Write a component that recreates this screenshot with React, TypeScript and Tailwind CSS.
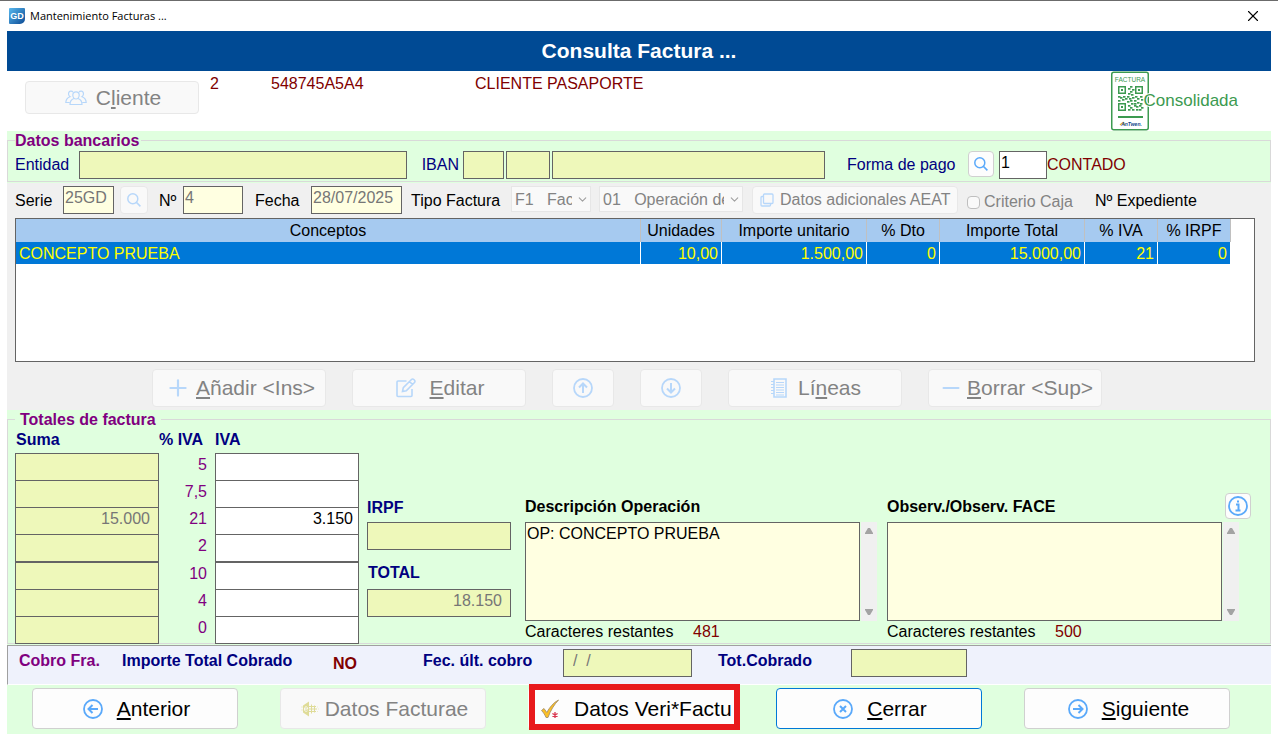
import type { ReactNode } from 'react';
import { ChevronDown, Minus, Plus, X } from 'lucide-react';

interface ButtonProps {
  children?: ReactNode;
  icon: ReactNode;
  className: string;
  disabled?: boolean;
  label?: string;
}

const rates = [
  { rate: '5', base: '', quota: '' },
  { rate: '7,5', base: '', quota: '' },
  { rate: '21', base: '15.000', quota: '3.150' },
  { rate: '2', base: '', quota: '' },
  { rate: '10', base: '', quota: '' },
  { rate: '4', base: '', quota: '' },
  { rate: '0', base: '', quota: '' },
];

const columns = [
  { title: 'Conceptos', width: '' },
  { title: 'Unidades', width: 'w-[81px]' },
  { title: 'Importe unitario', width: 'w-[145px]' },
  { title: '% Dto', width: 'w-[73px]' },
  { title: 'Importe Total', width: 'w-[145px]' },
  { title: '% IVA', width: 'w-[73px]' },
  { title: '% IRPF', width: 'w-[73px]' },
];

const lines = [['CONCEPTO PRUEBA', '10,00', '1.500,00', '0', '15.000,00', '21', '0']];

// dark modules of the finder-less part of the little QR code
const qrModules = [
  [12, 0], [10, 2], [14, 3], [12, 5], [10, 7], [13, 8], [0, 10], [2, 11], [5, 10], [7, 12], [4, 13], [0, 14],
  [9, 10], [11, 12], [14, 11], [17, 10], [19, 12], [22, 10], [23, 13], [16, 14], [12, 14], [9, 15], [13, 17],
  [16, 17], [19, 16], [22, 17], [10, 19], [12, 21], [16, 19], [18, 20], [21, 19], [23, 21], [10, 23], [14, 23],
  [18, 23], [21, 23],
];

function Button({ children, icon, className, disabled, label }: ButtonProps) {
  return (
    <button
      type="button"
      disabled={disabled}
      aria-label={label}
      className={`flex shrink-0 items-center rounded border ${
        disabled ? 'border-[#e8e8e8] bg-[#f9f9f9] text-[#838383]' : 'bg-[#fdfdfd] text-black'
      } ${className}`}
    >
      {icon}
      {children && <span className="whitespace-nowrap">{children}</span>}
    </button>
  );
}

function CircleIcon({ d, muted }: { d: string; muted?: boolean }) {
  return (
    <svg viewBox="0 0 20 20" fill="none" strokeWidth="2" className={`size-5 shrink-0 ${muted ? 'stroke-[#b7d7fa]' : 'stroke-[#5aa9fa]'}`}>
      <circle cx="10" cy="10" r="9" strokeWidth="1.8" />
      <path d={d} />
    </svg>
  );
}

function UsersIcon() {
  return (
    <svg viewBox="0 0 22 16" fill="none" stroke="#b7d7fa" strokeWidth="1.2" className="h-4 w-[22px] shrink-0">
      <path d="M11 1.800c2 0 3.200 1.400 3.200 3.200S13 9 11 9 7.800 6.800 7.800 5 9 1.800 11 1.800z" />
      <path d="M9 8.500c-2.500.8-4 2.500-4 6h12c0-3.500-1.500-5.200-4-6" />
      <path d="M8 2.300C7.500 1.400 6.500 1 5.500 1.200 4 1.500 3.300 3 3.600 4.500c.2 1 .7 1.800 1.400 2.200C2.500 7.500 1 9 .8 12.500h4M14 2.300c.5-.9 1.500-1.300 2.500-1.100 1.500.3 2.200 1.800 1.900 3.300-.2 1-.7 1.800-1.400 2.200 2.500.8 4 2.300 4.200 5.800h-4" />
    </svg>
  );
}

function EditIcon() {
  return (
    <svg viewBox="0 0 20 20" fill="none" stroke="#b7d7fa" strokeWidth="1.6" className="size-5 shrink-0">
      <path d="M10.500 3H2a1 1 0 0 0-1 1v13.500a1 1 0 0 0 1 1h13a1 1 0 0 0 1-1V11" />
      <path d="m6.500 13.500.8-3.800 8.200-8.200a1.600 1.600 0 0 1 2.300 0l.7.7a1.600 1.600 0 0 1 0 2.300l-8.200 8.200zM13.500 3.500l3 3" />
    </svg>
  );
}

function NotebookIcon() {
  return (
    <svg viewBox="0 0 16 20" fill="none" stroke="#b7d7fa" className="h-5 w-4 shrink-0">
      <path d="M3 1h12v18H3z" strokeWidth="1.6" />
      <path d="M5 4.500h8M5 7h8M5 9.500h8M5 12h8M5 14.500h8M5 17h8M0 3.500h3M0 6.500h3M0 9.500h3M0 12.500h3M0 15.500h3" />
    </svg>
  );
}

function CopyIcon() {
  return (
    <svg viewBox="0 0 14 14" fill="none" stroke="#b7d7fa" strokeWidth="1.3" className="size-3.5 shrink-0">
      <rect x="3.500" y="1" width="9.500" height="9.500" rx="1" />
      <path d="M3.500 3.500H2a1 1 0 0 0-1 1V12a1 1 0 0 0 1 1h7.500a1 1 0 0 0 1-1v-1.500" />
    </svg>
  );
}

function SearchIcon({ muted }: { muted?: boolean }) {
  return (
    <svg viewBox="0 0 14 14" fill="none" strokeWidth="1.5" className={`size-3.5 shrink-0 ${muted ? 'stroke-[#b7d7fa]' : 'stroke-[#5aa9fa]'}`}>
      <circle cx="5.800" cy="5.800" r="5" />
      <path d="m9.400 9.400 4 4" />
    </svg>
  );
}

function FacturaeIcon() {
  return (
    <svg viewBox="0 0 18 16" fill="none" className="h-4 w-[18px] shrink-0">
      <path d="M2 4.500 8 .5v15l-6-4z" fill="#dfdc98" />
      <path d="M3.500 8h3.200c0-3-3.200-3-3.200 0s2 2.500 3 1.800" stroke="#f9f9f9" />
      <path d="M10.500 3.500v9M13.500 4.500v7M8 5.500h7M8 8h8M8 10.500h7" stroke="#dfdc98" />
      <path d="M0 6h2M0 9h2M16 6h1M17 8h1M16 10.500h1" stroke="#efedc9" />
    </svg>
  );
}

function CheckIcon() {
  return (
    <svg viewBox="0 0 20 20" fill="none" className="size-5 shrink-0">
      <path d="M1.500 11.500 4 9.500l2.800 4C9.500 8.500 13.500 3.500 18.500 1c-4.500 4.800-8 10.500-10.500 17.500H6C5 16 3.500 13.500 1.500 11.500z" fill="#fbbf24" stroke="#a8926a" strokeWidth=".9" />
      <path d="M15 13v6M12.400 14.500l5.200 3M17.600 14.500l-5.200 3" stroke="#d9364f" strokeWidth="1.300" />
    </svg>
  );
}

function AppIcon() {
  return (
    <svg viewBox="0 0 16 16" className="size-4 shrink-0">
      <defs>
        <linearGradient id="gd" x1="0" y1="0" x2="1" y2="1">
          <stop offset="0" stopColor="#58b8ee" />
          <stop offset="1" stopColor="#0c4a94" />
        </linearGradient>
      </defs>
      <path d="M1 0h14a1 1 0 0 1 1 1v10a5 5 0 0 1-5 5H1a1 1 0 0 1-1-1V1a1 1 0 0 1 1-1z" fill="url(#gd)" />
      <text x="8" y="11" textAnchor="middle" fontSize="9" fontWeight="700" fill="#fff">GD</text>
    </svg>
  );
}

function QrBadge() {
  return (
    <svg viewBox="0 0 38 60" fill="none" className="h-[60px] w-[38px] shrink-0">
      <rect x=".75" y="1.250" width="36.500" height="57.500" rx="2" stroke="#3c9a50" strokeWidth="1.500" />
      <text x="19" y="11" textAnchor="middle" fontSize="6.500" fill="#3c9a50">FACTURA</text>
      <g transform="translate(7 15)">
        <path d="M.75.75h6.500v6.500H.75zM17.750.75h6.500v6.500h-6.500zM.75 17.750h6.500v6.500H.75z" stroke="#3c9a50" strokeWidth="1.500" />
        <path d="M3 3h2v2H3zM20 3h2v2h-2zM3 20h2v2H3z" fill="#3c9a50" />
        {qrModules.map(([x, y]) => (
          <rect key={`${x}-${y}`} x={x} y={y} width="2.500" height="1.700" fill="#3c9a50" />
        ))}
      </g>
      <path d="M7 46h25" stroke="#3c9a50" strokeWidth="2" />
      <path d="m9 54 3-2.500 1.500 2.500" stroke="#e3b62c" strokeWidth="1.300" />
      <text x="20.500" y="55" textAnchor="middle" fontSize="5" fontStyle="italic" fontWeight="700" fill="#14478a">AnTwen.</text>
    </svg>
  );
}

function SearchButton({ label, disabled, className }: { label: string; disabled?: boolean; className: string }) {
  return (
    <Button
      label={label}
      disabled={disabled}
      className={`items-start justify-center ${className}`}
      icon={<SearchIcon muted={disabled} />}
    />
  );
}

function Notes({ id, title, text, left, children }: { id: string; title: string; text: string; left: string; children?: ReactNode }) {
  return (
    <div className="min-w-0 flex-1">
      <div className="flex h-[29px] items-start justify-between">
        <label htmlFor={id} className="pt-[5px] font-bold">{title}</label>
        {children}
      </div>
      <div className="flex h-[99px]">
        <textarea
          id={id}
          readOnly
          defaultValue={text}
          className="min-w-0 flex-1 resize-none border border-[#646464] bg-[#ffffe1] px-px pt-px leading-5 outline-none"
        />
        <div className="ml-px flex w-4 flex-col items-center justify-between bg-[#f0f0f0] py-[6px]">
          <svg viewBox="0 0 8 6" className="h-1.5 w-2"><path d="M0 6V5l3-5h2l3 5v1z" fill="#a3a3a3" /></svg>
          <svg viewBox="0 0 8 6" className="h-1.5 w-2"><path d="M0 0v1l3 5h2l3-5V0z" fill="#a3a3a3" /></svg>
        </div>
      </div>
      <p className="flex pt-0.5">
        <span className="w-[168px]">Caracteres restantes</span>
        <span className="text-[#800000]">{left}</span>
      </p>
    </div>
  );
}

const box = 'h-7 min-w-0 border border-[#646464] px-px pb-1 outline-none';
const olive = 'bg-[#eef8ba]';
const cream = 'bg-[#ffffe1] text-[#767676]';

export default function App() {
  return (
    <div className="min-h-screen w-full border-t border-[#6b6b6b] bg-white px-[7px] font-['Liberation_Sans',Arial,sans-serif] text-base leading-[18px] text-black">
      <header className="flex h-[30px] items-center">
        <span className="ml-0.5"><AppIcon /></span>
        <span className="ml-[5px] flex-1 font-['Open_Sans','Noto_Sans',sans-serif] text-[11px]">Mantenimiento Facturas ...</span>
        <button type="button" aria-label="Cerrar ventana" className="mr-[9px]"><X size={18} strokeWidth={1.5} /></button>
      </header>

      <h1 className="flex h-10 items-center justify-center bg-[#004a94] text-[21px] font-bold text-white">Consulta Factura ...</h1>

      <section className="flex h-[60px] text-[#800000]">
        <Button disabled icon={<UsersIcon />} className="mt-[10px] ml-[18px] h-[33px] w-[174px] justify-center gap-[9px] pl-0.5 text-[21px]">
          C<u className="underline-offset-2">l</u>iente
        </Button>
        <span className="ml-[11px] w-[61px] pt-1">2</span>
        <span className="w-[204px] pt-1">548745A5A4</span>
        <span className="flex-1 pt-1">CLIENTE PASAPORTE</span>
        <div className="mr-[33px] flex items-center text-[#3c9a50]">
          <QrBadge />
          <span className="relative -ml-1.5 text-[17px] [text-shadow:1px_0_#fff,-1px_0_#fff,0_1px_#fff,0_-1px_#fff]">Consolidada</span>
        </div>
      </section>

      <div className="bg-[#e0ffdf] pb-px">
        <fieldset className="h-[51px] border border-[#d9d9d9] px-[7px]">
          <legend className="h-[18px] pt-px pr-0.5 font-bold text-[#800080]">Datos bancarios</legend>
          <div className="flex items-start pt-0.5 text-[#000080]">
            <label htmlFor="entidad" className="w-16 pt-[5px]">Entidad</label>
            <input id="entidad" disabled className={`${box} ${olive} flex-[328]`} />
            <label htmlFor="iban" className="ml-[15px] w-[41px] pt-[5px]">IBAN</label>
            <input id="iban" disabled className={`${box} ${olive} w-[41px]`} />
            <input aria-label="IBAN entidad" disabled className={`${box} ${olive} ml-0.5 w-11`} />
            <input aria-label="IBAN cuenta" disabled className={`${box} ${olive} ml-0.5 flex-[273]`} />
            <label htmlFor="pago" className="ml-[22px] w-[121px] pt-[5px]">Forma de pago</label>
            <SearchButton label="Buscar forma de pago" className="size-[26px] border-[#d0d0d0] pt-[5px]" />
            <input id="pago" defaultValue="1" className={`${box} ml-[5px] w-12 bg-white text-black`} />
            <span className="w-[216px] pt-[5px] text-[#800000]">CONTADO</span>
          </div>
        </fieldset>
      </div>

      <main className="h-[227px] bg-[#f0f0f0] px-2 pt-[3px]">
        <div className="flex h-8 items-start whitespace-nowrap">
          <label htmlFor="serie" className="w-12 pt-1.5">Serie</label>
          <input id="serie" disabled defaultValue="25GD" className={`${box} ${cream} w-[51px]`} />
          <SearchButton label="Buscar serie" disabled className="ml-1.5 size-7 pt-1.5" />
          <label htmlFor="numero" className="ml-[11px] w-6 pt-1.5">Nº</label>
          <input id="numero" disabled defaultValue="4" className={`${box} ${cream} w-[60px]`} />
          <label htmlFor="fecha" className="ml-3 w-14 pt-1.5">Fecha</label>
          <input id="fecha" disabled defaultValue="28/07/2025" className={`${box} ${cream} w-[91px]`} />
          <label htmlFor="tipo" className="ml-[9px] w-[100px] pt-1.5">Tipo Factura</label>
          <span className="relative">
            <select id="tipo" disabled className="h-[26px] w-20 appearance-none overflow-hidden border border-[#e6e6e6] bg-[#f9f9f9] pt-0.5 pr-[18px] pl-[3px] text-[#838383] opacity-100">
              <option>{'F1\u00a0\u00a0\u00a0Factura'}</option>
            </select>
            <ChevronDown size={13} color="#a0a0a0" className="absolute top-[7px] right-0.5" />
          </span>
          <span className="relative ml-2">
            <select aria-label="Clave de operación" disabled className="h-[26px] w-36 appearance-none overflow-hidden border border-[#e6e6e6] bg-[#f9f9f9] pt-0.5 pr-[18px] pl-[3px] text-[#838383] opacity-100">
              <option>{'01\u00a0\u00a0\u00a0Operación de régimen general'}</option>
            </select>
            <ChevronDown size={13} color="#a0a0a0" className="absolute top-[7px] right-0.5" />
          </span>
          <Button disabled icon={<CopyIcon />} className="ml-[9px] h-7 w-[206px] gap-1.5 pl-[7px]">Datos adicionales AEAT</Button>
          <label className="ml-[9px] flex items-center gap-1 pt-[7px] text-[#838383]">
            <input type="checkbox" disabled className="size-[13px] appearance-none rounded-sm border border-[#bfbfbf] bg-[#f9f9f9]" />
            Criterio Caja
          </label>
          <span className="ml-[22px] pt-1.5">Nº Expediente</span>
        </div>

        <div className="mr-2 h-36 border border-[#646464] bg-white pr-[23px]">
          <table className="w-full table-fixed border-collapse">
            <thead>
              <tr className="h-[23px] bg-[#a6caf0]">
                {columns.map(c => (
                  <th key={c.title} className={`border-r border-[#c0c0c0] p-0 font-normal ${c.width}`}>{c.title}</th>
                ))}
              </tr>
            </thead>
            <tbody>
              {lines.map((line, i) => (
                <tr key={i} className="h-[22px] bg-[#0078d7] text-[#ffff00]">
                  {line.map((cell, j) => (
                    <td key={j} className={`border-r border-white px-[3px] pt-0.5 pb-0 ${j ? 'text-right' : ''}`}>{cell}</td>
                  ))}
                </tr>
              ))}
            </tbody>
          </table>
        </div>

        <div className="mt-[7px] ml-[137px] flex gap-[26px] text-[21px]">
          <Button disabled icon={<Plus size={26} strokeWidth={2} color="#b7d7fa" />} className="h-[38px] w-[174px] gap-[5px] pl-3">
            <u className="underline-offset-2">A</u>ñadir &lt;Ins&gt;
          </Button>
          <Button disabled icon={<EditIcon />} className="h-[38px] w-[174px] justify-center gap-[14px] pl-0.5">
            <u className="underline-offset-2">E</u>ditar
          </Button>
          <Button disabled label="Subir" icon={<CircleIcon muted d="M10 15V6M6 9.500 10 5.500l4 4" />} className="h-[38px] w-[62px] justify-center" />
          <Button disabled label="Bajar" icon={<CircleIcon muted d="M10 5v9M6 10.500l4 4 4-4" />} className="h-[38px] w-[62px] justify-center" />
          <Button disabled icon={<NotebookIcon />} className="h-[38px] w-[174px] justify-center gap-[11px] pl-0.5">
            Lí<u className="underline-offset-2">n</u>eas
          </Button>
          <Button disabled icon={<Minus size={26} strokeWidth={1.7} color="#b7d7fa" />} className="h-[38px] w-[174px] gap-[3px] pl-[9px]">
            <u className="underline-offset-2">B</u>orrar &lt;Sup&gt;
          </Button>
        </div>
      </main>

      <div className="bg-[#e0ffdf] pb-px">
        <fieldset className="h-[234px] border border-[#d9d9d9] pr-[31px] pl-[7px]">
          <legend className="h-[18px] px-[5px] pt-px font-bold text-[#800080]">Totales de factura</legend>
          <div className="flex">
            <div>
              <div className="flex h-[25px] pt-[3px] pl-px font-bold text-[#000080]">
                <span className="w-[143px]">Suma</span>
                <span className="w-14">% IVA</span>
                <span>IVA</span>
              </div>
              {rates.map((r, i) => (
                <div key={r.rate} className={`flex items-start ${i === 0 || i === 4 ? '' : '-mt-px'}`}>
                  <input aria-label={`Suma al ${r.rate} %`} disabled defaultValue={r.base} className={`${box} ${olive} w-36 pr-2 text-right text-[#767676]`} />
                  <span className="w-12 pt-[3px] text-right text-[#800080]">{r.rate}</span>
                  <input aria-label={`IVA al ${r.rate} %`} defaultValue={r.quota} className={`${box} ml-2 w-36 bg-white pr-[5px] text-right`} />
                </div>
              ))}
            </div>

            <div className="ml-2 flex w-36 flex-col pt-[71px] text-[#000080]">
              <label htmlFor="irpf" className="h-[23px] font-bold">IRPF</label>
              <input id="irpf" disabled className={`${box} ${olive}`} />
              <label htmlFor="total" className="mt-[14px] h-[25px] pl-px font-bold">TOTAL</label>
              <input id="total" disabled defaultValue="18.150" className={`${box} ${olive} pr-2 text-right text-[#767676]`} />
            </div>

            <div className="ml-[14px] flex flex-1 gap-[10px] pt-[65px]">
              <Notes id="descripcion" title="Descripción Operación" text="OP: CONCEPTO PRUEBA" left="481" />
              <Notes id="observaciones" title="Observ./Observ. FACE" text="" left="500">
                <Button
                  label="Información"
                  className="-mr-3 size-[26px] justify-center border-[#d0d0d0]"
                  icon={<CircleIcon d="M8 8.500h2.500V14M7.500 14.500h5M9 5.500h2" />}
                />
              </Notes>
            </div>
          </div>
        </fieldset>
      </div>

      <section className="flex h-10 items-start border-t border-b border-l border-t-[#a0a0a0] border-b-white border-l-[#a0a0a0] bg-[#eff2fc] pt-[3px] font-bold text-[#000080]">
        <span className="ml-[11px] w-[103px] pt-[3px] text-[#800080]">Cobro Fra.</span>
        <span className="w-[211px] pt-[3px]">Importe Total Cobrado</span>
        <span className="w-[90px] pt-1.5 text-[#800000]">NO</span>
        <label htmlFor="cobro" className="w-[140px] pt-[3px]">Fec. últ. cobro</label>
        <input id="cobro" disabled defaultValue="/  /" className={`${box} ${olive} w-[129px] pl-[9px] font-normal text-[#767676]`} />
        <label htmlFor="cobrado" className="ml-[26px] w-[133px] pt-[3px]">Tot.Cobrado</label>
        <input id="cobrado" disabled className={`${box} ${olive} w-[116px]`} />
      </section>

      <footer className="grid h-[49px] grid-cols-5 gap-[42px] bg-[#e0ffdf] pt-[3px] pr-[41px] pl-[25px] text-[21px]">
        <Button icon={<CircleIcon d="M15 10H6M9.500 6 5.500 10l4 4" />} className="h-[41px] justify-center gap-[14px] border-[#d0d0d0] pl-[3px]">
          <u className="underline-offset-2">A</u>nterior
        </Button>
        <Button disabled icon={<FacturaeIcon />} className="h-[41px] justify-center gap-1.5 pl-[3px]">Datos Facturae</Button>
        <div className="relative">
          <Button icon={<CheckIcon />} className="h-[41px] w-full gap-[14px] border-transparent pl-[11px]">Datos Veri*Factu</Button>
          <span className="pointer-events-none absolute -top-1 -right-1.5 left-px h-[46px] border-[6px] border-[#e81a1c]" />
        </div>
        <Button icon={<CircleIcon d="m7 7 6 6M13 7l-6 6" />} className="h-[41px] justify-center gap-[14px] border-[#0078d7] pl-0.5">
          <u className="underline-offset-2">C</u>errar
        </Button>
        <Button icon={<CircleIcon d="M5 10h9M10.500 6l4 4-4 4" />} className="h-[41px] justify-center gap-[14px] border-[#d0d0d0] pl-[3px]">
          <u className="underline-offset-2">S</u>iguiente
        </Button>
      </footer>
    </div>
  );
}
